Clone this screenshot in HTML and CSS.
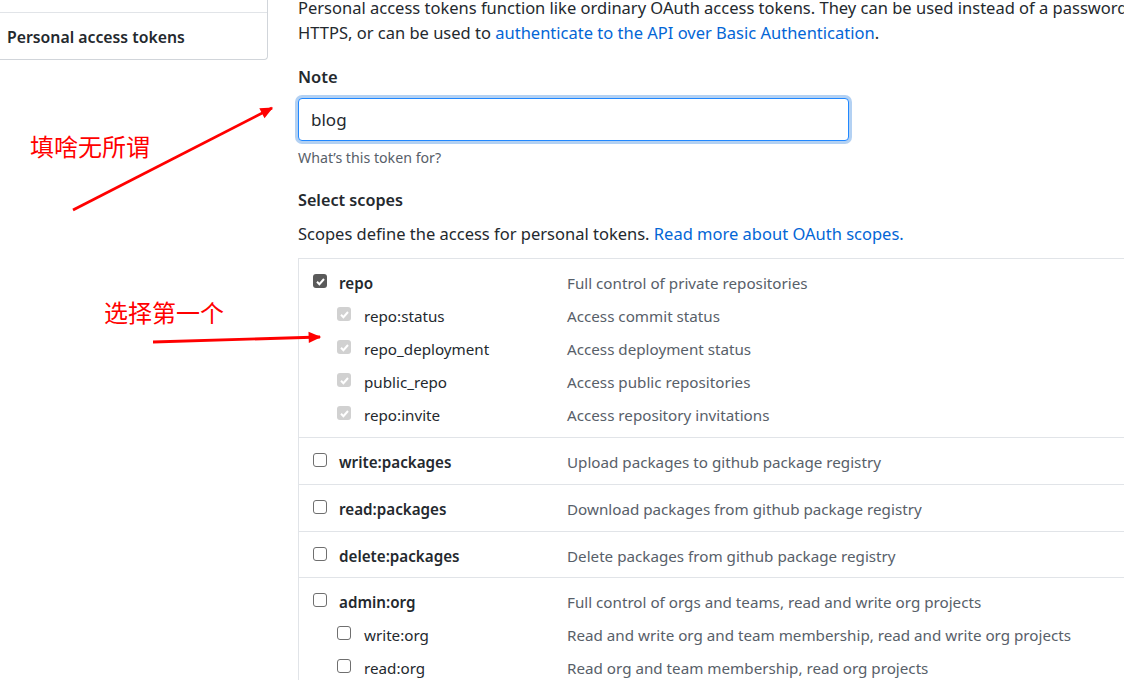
FILE: index.html
```html
<!DOCTYPE html>
<html lang="en">
<head>
<meta charset="utf-8">
<title>Personal access tokens</title>
<link rel="stylesheet" href="styles.css">
</head>
<body>
<div class="page">
  <aside class="sidebar">
    <nav class="menu">
      <div class="menu-item prev"></div>
      <div class="menu-item active">Personal access tokens</div>
    </nav>
  </aside>
  <main class="content">
    <p class="intro">Personal access tokens function like ordinary OAuth access tokens. They can be used instead of a password for Git over<br>HTTPS, or can be used to <a href="#">authenticate to the API over Basic Authentication</a>.</p>
    <label class="field-label" for="note">Note</label>
    <input id="note" class="text-input" type="text" value="blog">
    <p class="field-note">What’s this token for?</p>
    <h3 class="section-title">Select scopes</h3>
    <p class="section-desc">Scopes define the access for personal tokens. <a href="#">Read more about OAuth scopes.</a></p>
    <div class="scopes">
      <div class="group">
        <div class="row"><span class="name-cell"><span class="cb checked"><svg viewBox="0 0 13 13" width="13" height="13"><path d="M3 6.8 L5.4 9.2 L10 4" fill="none" stroke="#fff" stroke-width="2"/></svg></span><span class="name bold">repo</span></span><span class="desc">Full control of private repositories</span></div>
        <div class="row sub"><span class="name-cell"><span class="cb disabled"><svg viewBox="0 0 13 13" width="13" height="13"><path d="M3 6.8 L5.4 9.2 L10 4" fill="none" stroke="#fff" stroke-width="2"/></svg></span><span class="name">repo:status</span></span><span class="desc">Access commit status</span></div>
        <div class="row sub"><span class="name-cell"><span class="cb disabled"><svg viewBox="0 0 13 13" width="13" height="13"><path d="M3 6.8 L5.4 9.2 L10 4" fill="none" stroke="#fff" stroke-width="2"/></svg></span><span class="name">repo_deployment</span></span><span class="desc">Access deployment status</span></div>
        <div class="row sub"><span class="name-cell"><span class="cb disabled"><svg viewBox="0 0 13 13" width="13" height="13"><path d="M3 6.8 L5.4 9.2 L10 4" fill="none" stroke="#fff" stroke-width="2"/></svg></span><span class="name">public_repo</span></span><span class="desc">Access public repositories</span></div>
        <div class="row sub"><span class="name-cell"><span class="cb disabled"><svg viewBox="0 0 13 13" width="13" height="13"><path d="M3 6.8 L5.4 9.2 L10 4" fill="none" stroke="#fff" stroke-width="2"/></svg></span><span class="name">repo:invite</span></span><span class="desc">Access repository invitations</span></div>
      </div>
      <div class="group">
        <div class="row"><span class="name-cell"><span class="cb empty"></span><span class="name bold">write:packages</span></span><span class="desc">Upload packages to github package registry</span></div>
      </div>
      <div class="group">
        <div class="row"><span class="name-cell"><span class="cb empty"></span><span class="name bold">read:packages</span></span><span class="desc">Download packages from github package registry</span></div>
      </div>
      <div class="group short">
        <div class="row"><span class="name-cell"><span class="cb empty"></span><span class="name bold">delete:packages</span></span><span class="desc">Delete packages from github package registry</span></div>
      </div>
      <div class="group">
        <div class="row"><span class="name-cell"><span class="cb empty"></span><span class="name bold">admin:org</span></span><span class="desc">Full control of orgs and teams, read and write org projects</span></div>
        <div class="row sub"><span class="name-cell"><span class="cb empty"></span><span class="name">write:org</span></span><span class="desc">Read and write org and team membership, read and write org projects</span></div>
        <div class="row sub"><span class="name-cell"><span class="cb empty"></span><span class="name">read:org</span></span><span class="desc">Read org and team membership, read org projects</span></div>
      </div>
    </div>
  </main>

  <div class="annotation note-1">填啥无所谓</div>
  <div class="annotation note-2">选择第一个</div>
  <svg class="arrows" width="1124" height="680" viewBox="0 0 1124 680">
    <defs>
      <marker id="head" viewBox="0 0 10 10" refX="9" refY="5" markerWidth="5" markerHeight="4.5" orient="auto" markerUnits="strokeWidth">
        <path d="M0 0.5 L10 5 L0 9.5 Z" fill="#f00"/>
      </marker>
    </defs>
    <line x1="73" y1="210" x2="272" y2="108" stroke="#f00" stroke-width="2.8" marker-end="url(#head)"/>
    <line x1="153" y1="342" x2="320" y2="337" stroke="#f00" stroke-width="2.8" marker-end="url(#head)"/>
  </svg>
</div>
</body>
</html>
```

FILE: styles.css
```css
html, body {
  margin: 0;
  padding: 0;
  background: #fff;
}

body {
  width: 1124px;
  height: 680px;
  overflow: hidden;
  font-family: "Noto Sans", "Open Sans", sans-serif;
  font-size: 16.5px;
  color: #24292e;
}

a {
  color: #0366d6;
  text-decoration: none;
}

.page {
  position: relative;
  display: flex;
  gap: 30px;
  width: 1124px;
  height: 680px;
}

/* Sidebar */
.sidebar {
  flex: none;
  width: 268px;
}

.menu {
  border-right: 1px solid #d1d5da;
  border-bottom: 1px solid #d1d5da;
  border-bottom-right-radius: 4px;
}

.menu-item.prev {
  height: 12px;
  border-bottom: 1px solid #e1e4e8;
}

.menu-item.active {
  height: 46px;
  line-height: 48px;
  padding-left: 7px;
  font-size: 15.8px;
  font-weight: 600;
  color: #24292e;
}

/* Main */
.content {
  flex: 1;
  min-width: 0;
  margin-top: -5px;
}

.intro {
  margin: 0;
  line-height: 25px;
  white-space: nowrap;
}

.field-label {
  display: block;
  margin-top: 20px;
  line-height: 24px;
  font-weight: 600;
}

.text-input {
  display: block;
  box-sizing: border-box;
  width: 551px;
  height: 43px;
  margin: 9px 0 0 0;
  padding: 0 12px;
  border: 1px solid #2188ff;
  border-radius: 4px;
  box-shadow: 0 0 0 3px rgba(3, 102, 214, 0.3);
  font-family: "Noto Sans", "Open Sans", sans-serif;
  font-size: 17px;
  color: #24292e;
  outline: none;
}

.field-note {
  margin: 6px 0 0 0;
  line-height: 21px;
  font-size: 14.2px;
  color: #586069;
}

.section-title {
  margin: 20px 0 0 0;
  line-height: 24px;
  font-size: 16.2px;
  font-weight: 600;
}

.section-desc {
  margin: 10px 0 0 0;
  line-height: 24px;
}

/* Scopes table */
.scopes {
  width: 1000px;
  margin-top: 12px;
  border-left: 1px solid #e1e4e8;
  font-size: 15.2px;
}

.group {
  border-top: 1px solid #e1e4e8;
  padding: 7px 0 6px 14px;
}

.group.short {
  padding-bottom: 5px;
}

.row {
  display: flex;
  align-items: center;
  height: 33px;
}

.name-cell {
  display: flex;
  align-items: center;
  flex: none;
  box-sizing: border-box;
  width: 254px;
}

.row.sub .name-cell {
  padding-left: 24px;
}

.cb {
  flex: none;
  display: inline-flex;
  box-sizing: border-box;
  width: 14px;
  height: 14px;
  border-radius: 3px;
  margin-right: 12px;
  margin-bottom: 3px;
}

.row.sub .cb {
  margin-right: 13px;
}

.cb svg {
  display: block;
  margin: auto;
}

.cb.checked {
  background: #5a5a5a;
}

.cb.disabled {
  background: #d1d1d1;
}

.cb.empty {
  background: #fff;
  border: 1px solid #6f6f6f;
}

.name {
  color: #24292e;
}

.name.bold {
  font-weight: 600;
}

.desc {
  color: #586069;
  white-space: nowrap;
}

/* Annotations */
.annotation {
  position: absolute;
  font-family: "Noto Sans CJK SC", sans-serif;
  font-size: 24px;
  line-height: 30px;
  color: #f00;
  white-space: nowrap;
}

.note-1 {
  left: 30px;
  top: 131px;
}

.note-2 {
  left: 104px;
  top: 297px;
}

.arrows {
  position: absolute;
  left: 0;
  top: 0;
  pointer-events: none;
}
```
